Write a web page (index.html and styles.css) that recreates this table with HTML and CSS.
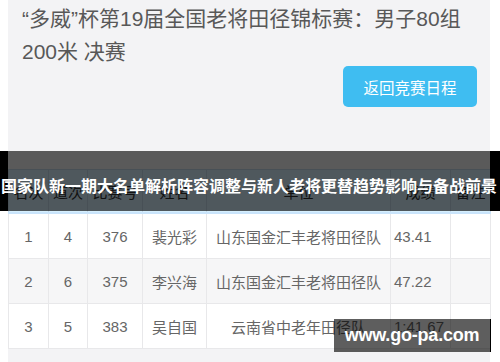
FILE: index.html
```html
<!DOCTYPE html>
<html lang="zh-CN">
<head>
<meta charset="utf-8">
<link rel="stylesheet" href="styles.css">
</head>
<body>
<div class="page">
  <h1 class="title">“多威”杯第19届全国老将田径锦标赛：男子80组 200米 决赛</h1>
  <div class="actions"><a class="btn">返回竞赛日程</a></div>
  <table class="results">
    <colgroup>
      <col class="c1"><col class="c2"><col class="c3"><col class="c4"><col class="c5"><col class="c6"><col class="c7">
    </colgroup>
    <thead>
      <tr><th>名次</th><th>道次</th><th>比赛号</th><th>姓名</th><th>单位</th><th>成绩</th><th>备注</th></tr>
    </thead>
    <tbody>
      <tr><td>1</td><td>4</td><td>376</td><td>裴光彩</td><td>山东国金汇丰老将田径队</td><td class="time">43.41</td><td></td></tr>
      <tr class="alt"><td>2</td><td>6</td><td>375</td><td>李兴海</td><td>山东国金汇丰老将田径队</td><td class="time">47.22</td><td></td></tr>
      <tr><td>3</td><td>5</td><td>383</td><td>吴自国</td><td>云南省中老年田径队</td><td class="time">1:41.67</td><td></td></tr>
    </tbody>
  </table>
</div>
<div class="banner"><span class="banner-text">国家队新一期大名单解析阵容调整与新人老将更替趋势影响与备战前景</span></div>
<div class="watermark">www.go-pa.com</div>
</body>
</html>
```

FILE: styles.css
```css
html, body {
  margin: 0;
  padding: 0;
  background: #ffffff;
  height: 100%;
  overflow: hidden;
}
body {
  position: relative;
  font-family: "Liberation Sans", "Noto Sans CJK SC", sans-serif;
}
.page {
  margin: 0 10px 0 8px;
  background: #f3f3f5;
  height: 362px;
  padding-top: 2px;
  box-sizing: border-box;
}
.title {
  margin: 0;
  padding: 0 14px;
  font-size: 21px;
  line-height: 33px;
  font-weight: normal;
  color: #585858;
  height: 64px;
}
.actions {
  display: flex;
  justify-content: flex-end;
  padding-right: 13px;
}
.btn {
  display: flex;
  align-items: center;
  justify-content: center;
  width: 134px;
  height: 41px;
  border-radius: 5px;
  background: #3fbdf1;
  color: #ffffff;
  font-size: 15.5px;
}
.results {
  margin-top: 62px;
  width: 482px;
  border-collapse: collapse;
  table-layout: fixed;
  font-size: 15px;
  color: #666666;
}
.c1 { width: 40px; }
.c2 { width: 39px; }
.c3 { width: 55px; }
.c4 { width: 64px; }
.c5 { width: 184px; }
.c6 { width: 60px; }
.c7 { width: 40px; }
.results th {
  height: 42px;
  padding: 0;
  font-weight: normal;
  color: #333333;
  background: #d5eefc;
  border: 1px solid #c4d8ea;
  border-bottom: 2px solid #c9e4fb;
  text-align: center;
}
.results td {
  height: 44px;
  padding: 0;
  text-align: center;
  border: 1px solid #e8e8ea;
  background: #ffffff;
  white-space: nowrap;
}
.results tr.alt td {
  background: #f6f6f7;
}
.results td.time {
  text-align: left;
  padding-left: 3px;
}
.banner {
  position: absolute;
  left: 0;
  right: 0;
  top: 151px;
  height: 60px;
  box-sizing: border-box;
  border-left: 8px solid #000000;
  border-right: 10px solid #000000;
  background: rgba(0, 0, 0, 0.63);
  display: flex;
  justify-content: center;
  align-items: center;
}
.banner-text {
  white-space: nowrap;
  color: #ffffff;
  font-family: "Noto Sans CJK SC", sans-serif;
  font-weight: bold;
  font-size: 16px;
  line-height: 20px;
  margin-top: 8px;
}
.watermark {
  position: absolute;
  left: 334px;
  top: 319px;
  width: 156px;
  height: 33px;
  border-right: 1px solid #000000;
  background: rgba(0, 0, 0, 0.63);
  color: #ffffff;
  font-weight: bold;
  font-size: 18px;
  line-height: 33px;
  text-align: center;
  letter-spacing: -0.2px;
}
```
